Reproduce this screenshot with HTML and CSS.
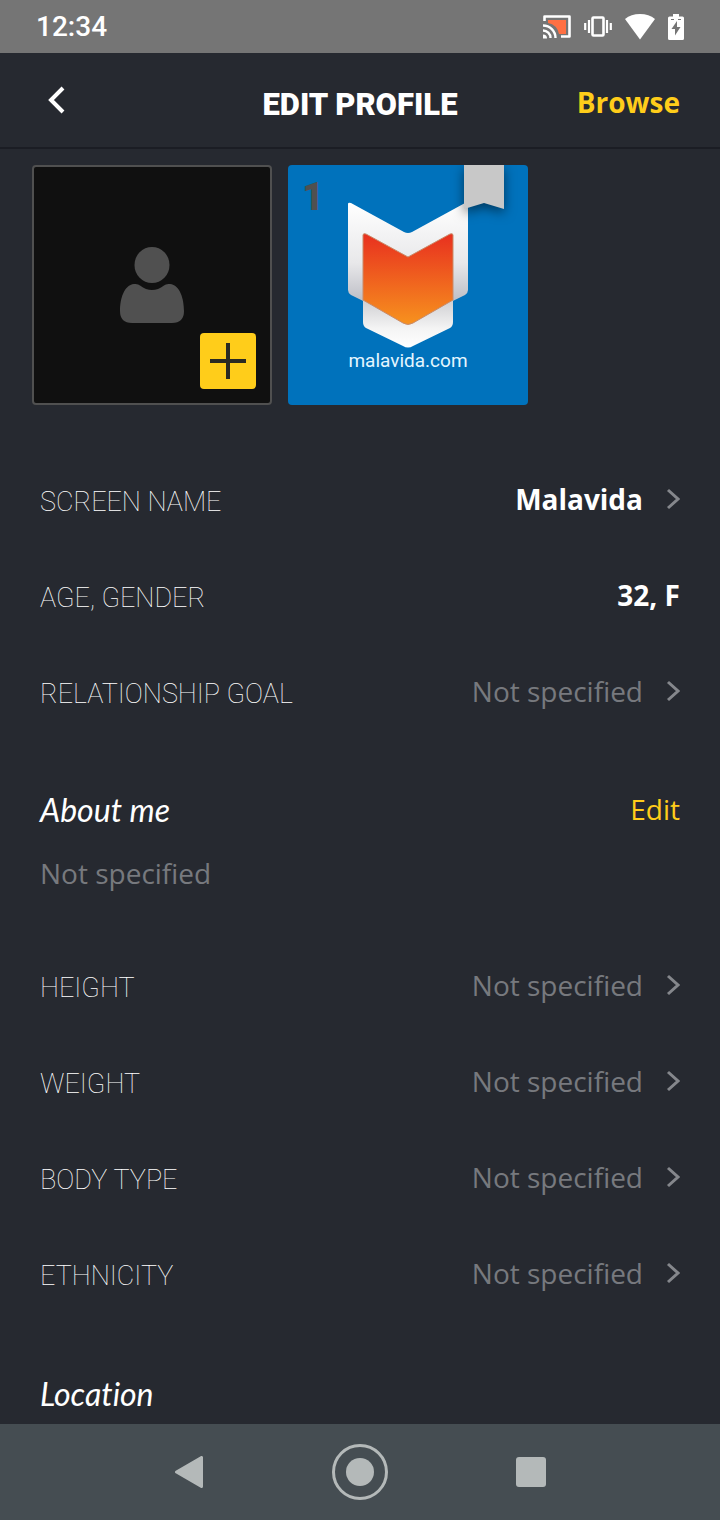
FILE: index.html
```html
<!DOCTYPE html>
<html lang="en">
<head>
    <meta charset="UTF-8">
    <meta name="viewport" content="width=device-width, initial-scale=1.0">
    <title>Edit Profile</title>
    <link rel="stylesheet" href="styles.css">
</head>
<body>
    <div class="status-bar">
        <span class="clock">12:34</span>
        <div class="status-icons">
            <svg class="cast" width="28" height="24" viewBox="0 0 28 24">
                <path d="M5 5h18v14h-7A14 14 0 0 0 5 8z" fill="#ff7043"/>
                <path d="M1.5 6V1.5h25v20H18" fill="none" stroke="#fff" stroke-width="2.6" stroke-linejoin="round"/>
                <path d="M0 10.5A12.5 12.5 0 0 1 12.5 23M0 15.5A7.5 7.5 0 0 1 7.5 23" fill="none" stroke="#fff" stroke-width="2.4"/>
                <path d="M0 19.5a4 4 0 0 1 4 4H0z" fill="#fff"/>
            </svg>
            <svg class="vibrate" width="28" height="24" viewBox="0 0 28 24">
                <rect x="8.5" y="2.5" width="11" height="18" rx="1" fill="none" stroke="#fff" stroke-width="2.6"/>
                <path d="M5 5v13M1.2 8v7M23 5v13M26.8 8v7" stroke="#fff" stroke-width="2.2"/>
            </svg>
            <svg class="wifi" width="30" height="26" viewBox="0 0 30 26">
                <path d="M0 5Q6 0 15 0t15 5L15 25.5z" fill="#fff"/>
            </svg>
            <svg class="battery" width="16" height="26" viewBox="0 0 16 26">
                <path d="M5 0h6v2.5h3.500A1.5 1.5 0 0 1 16 4v20.500a1.5 1.5 0 0 1-1.500 1.500h-13A1.5 1.5 0 0 1 0 24.500V4a1.5 1.5 0 0 1 1.500-1.500H5z" fill="#fff"/>
                <path d="M9 7l-5.500 8H7v6.500L12.500 13H9zM3 5h3v1H3zM10 5h3v1h-3z" fill="#757575"/>
            </svg>
        </div>
    </div>

    <header class="top-bar">
        <button type="button" class="back" aria-label="Back">
            <svg width="18" height="28" viewBox="0 0 18 28">
                <path d="M15 2L3 14l12 12" fill="none" stroke="#fff" stroke-width="4"/>
            </svg>
        </button>
        <h1>EDIT PROFILE</h1>
        <a href="#" class="browse">Browse</a>
    </header>

    <main>
        <section class="gallery">
            <button type="button" class="photo add-photo" aria-label="Add photo">
                <svg width="64" height="76" viewBox="0 0 64 76">
                    <ellipse cx="32" cy="18" rx="17.5" ry="18" fill="#505050"/>
                    <path d="M14 37q4-.5 6 1.500 12 9 24 0 2-2 6-1.500C60 38 64 52 64 64q0 12-12 12H12Q0 76 0 64C0 52 4 38 14 37z" fill="#505050"/>
                </svg>
                <span class="plus">
                    <svg width="36" height="36" viewBox="0 0 36 36">
                        <path d="M18 0v36M0 18h36" stroke="#2a2a22" stroke-width="4"/>
                    </svg>
                </span>
            </button>
            <button type="button" class="photo">
                <svg class="picture" viewBox="0 0 240 240">
                    <defs>
                        <linearGradient id="silver" x1="0" y1="0" x2="0" y2="1">
                            <stop offset="0" stop-color="#fff"/>
                            <stop offset=".5" stop-color="#e8e8ea"/>
                            <stop offset=".85" stop-color="#b9bac2"/>
                        </linearGradient>
                        <linearGradient id="fold" x1="0" y1="0" x2="0" y2="1">
                            <stop offset="0" stop-color="#cfcfd2"/>
                            <stop offset=".6" stop-color="#f4f4f4"/>
                            <stop offset="1" stop-color="#fff"/>
                        </linearGradient>
                        <linearGradient id="flame" x1="0" y1="0" x2="0" y2="1">
                            <stop offset="0" stop-color="#e8301f"/>
                            <stop offset="1" stop-color="#f7921e"/>
                        </linearGradient>
                    </defs>
                    <path d="M60 39q0-2 3-1l53 29q4 2 8 0l53-29q3-1 3 1v86q0 3-3 5l-57 28-57-28q-3-2-3-5z" fill="url(#silver)"/>
                    <path d="M75 135l45 24 45-24v22q0 4-3 6l-37 18q-5 3-10 0l-37-18q-3-2-3-6z" fill="url(#fold)"/>
                    <path d="M75 70q0-2 3-1l42 23 42-23q3-1 3 1v65l-40 23q-5 3-10 0l-40-23z" fill="url(#flame)" stroke="#c98b6a" stroke-width="1"/>
                    <text class="site" x="120" y="202" text-anchor="middle">malavida.com</text>
                </svg>
                <span class="order">1</span>
                <svg class="ribbon" width="40" height="44" viewBox="0 0 40 44">
                    <path d="M0 0h40v44l-20-6-20 6z" fill="#c8c8c8"/>
                </svg>
            </button>
        </section>

        <section class="fields">
            <button type="button" class="row">
                <span class="label">SCREEN NAME</span>
                <span class="value filled">Malavida</span>
                <svg class="chevron" viewBox="0 0 14 22"><path d="M2 2l10 9-10 9"/></svg>
            </button>
            <div class="row">
                <span class="label">AGE, GENDER</span>
                <span class="value filled">32, F</span>
            </div>
            <button type="button" class="row">
                <span class="label">RELATIONSHIP GOAL</span>
                <span class="value">Not specified</span>
                <svg class="chevron" viewBox="0 0 14 22"><path d="M2 2l10 9-10 9"/></svg>
            </button>
        </section>

        <section class="about">
            <div class="section-head">
                <h2>About me</h2>
                <a href="#" class="edit">Edit</a>
            </div>
            <p>Not specified</p>
        </section>

        <section class="fields">
            <button type="button" class="row">
                <span class="label">HEIGHT</span>
                <span class="value">Not specified</span>
                <svg class="chevron" viewBox="0 0 14 22"><path d="M2 2l10 9-10 9"/></svg>
            </button>
            <button type="button" class="row">
                <span class="label">WEIGHT</span>
                <span class="value">Not specified</span>
                <svg class="chevron" viewBox="0 0 14 22"><path d="M2 2l10 9-10 9"/></svg>
            </button>
            <button type="button" class="row">
                <span class="label">BODY TYPE</span>
                <span class="value">Not specified</span>
                <svg class="chevron" viewBox="0 0 14 22"><path d="M2 2l10 9-10 9"/></svg>
            </button>
            <button type="button" class="row">
                <span class="label">ETHNICITY</span>
                <span class="value">Not specified</span>
                <svg class="chevron" viewBox="0 0 14 22"><path d="M2 2l10 9-10 9"/></svg>
            </button>
        </section>

        <section class="location">
            <div class="section-head">
                <h2>Location</h2>
            </div>
        </section>
    </main>

    <nav class="nav-bar">
        <button type="button" aria-label="Back">
            <svg width="28" height="32" viewBox="0 0 28 32">
                <path d="M26.5 1.500v29L1.500 16z" fill="#b4b9b9" stroke="#b4b9b9" stroke-width="3" stroke-linejoin="round"/>
            </svg>
        </button>
        <button type="button" aria-label="Home">
            <svg width="56" height="56" viewBox="0 0 56 56">
                <circle cx="28" cy="28" r="26.5" fill="none" stroke="#b4b9b9" stroke-width="3"/>
                <circle cx="28" cy="28" r="14" fill="#b4b9b9"/>
            </svg>
        </button>
        <button type="button" aria-label="Recent apps">
            <svg width="30" height="30" viewBox="0 0 30 30">
                <rect width="30" height="30" rx="3" fill="#b4b9b9"/>
            </svg>
        </button>
    </nav>
</body>
</html>
```
FILE: styles.css
```css
* {
    margin: 0;
    padding: 0;
    box-sizing: border-box;
}

body {
    background: #262930;
    color: #fff;
    font-family: 'Open Sans', 'Noto Sans', sans-serif;
    font-size: 28px;
    height: 100vh;
    display: flex;
    flex-direction: column;
}

button {
    background: none;
    border: none;
    color: inherit;
    font: inherit;
    cursor: pointer;
}

a {
    color: #ffcd1a;
    text-decoration: none;
}

svg {
    display: block;
    flex-shrink: 0;
}

/* Status bar */
.status-bar {
    background: #757575;
    height: 53px;
    flex-shrink: 0;
    padding: 0 36px;
    display: flex;
    align-items: center;
    justify-content: space-between;
}

.clock {
    font-family: Roboto, sans-serif;
    font-weight: 500;
}

.status-icons {
    display: flex;
    align-items: center;
    gap: 13px;
}

/* Header */
.top-bar {
    height: 96px;
    flex-shrink: 0;
    padding: 4px 40px 0;
    border-bottom: 2px solid #1b1d24;
    display: grid;
    grid-template-columns: 1fr auto 1fr;
    align-items: center;
}

.back {
    justify-self: start;
    padding: 0 8px 4px;
}

h1 {
    font-family: Roboto, sans-serif;
    font-size: 31px;
    font-weight: 900;
    padding-top: 4px;
}

.browse {
    justify-self: end;
    font-weight: 700;
}

main {
    flex: 1;
    min-height: 0;
    overflow-y: auto;
    scrollbar-width: none;
}

/* Photos */
.gallery {
    display: flex;
    gap: 16px;
    padding: 16px 32px 46px;
}

.photo {
    position: relative;
    width: 240px;
    height: 240px;
    border-radius: 4px;
    background: #0072bc;
    overflow: hidden;
}

.add-photo {
    background: #101010;
    border: 2px solid #505050;
    display: flex;
    align-items: center;
    justify-content: center;
}

.plus {
    position: absolute;
    right: 14px;
    bottom: 14px;
    width: 56px;
    height: 56px;
    border-radius: 4px;
    background: #ffcd1a;
    display: flex;
    align-items: center;
    justify-content: center;
}

.picture {
    width: 100%;
    height: 100%;
}

.site {
    font-family: Roboto, sans-serif;
    font-size: 19px;
    fill: #e4f6ff;
}

.order {
    position: absolute;
    top: 12px;
    left: 14px;
    font-family: Roboto, sans-serif;
    font-size: 38px;
    font-weight: 900;
    line-height: 40px;
    color: #505050;
}

.ribbon {
    position: absolute;
    top: 0;
    right: 24px;
    filter: drop-shadow(0 4px 6px rgba(0, 0, 0, 0.5));
    overflow: visible;
}

/* Profile fields */
.row {
    width: 100%;
    height: 96px;
    padding: 0 40px;
    display: flex;
    align-items: center;
}

.label {
    flex: 1;
    padding-top: 6px;
    font-family: Roboto, sans-serif;
    font-size: 27px;
    font-weight: 100;
    text-align: left;
}

.value {
    color: #77797e;
}

.filled {
    color: #fff;
    font-weight: 700;
}

.chevron {
    width: 14px;
    height: 22px;
    margin-left: 23px;
    fill: none;
    stroke: #85878c;
    stroke-width: 3;
}

/* Text sections */
.about {
    padding: 38px 40px 32px;
}

.section-head {
    height: 64px;
    display: flex;
    align-items: center;
    justify-content: space-between;
}

h2 {
    font-family: Lato, cursive;
    font-size: 32px;
    font-style: italic;
    font-weight: 400;
    font-variant-ligatures: none;
}

.about p {
    line-height: 64px;
    color: #77797e;
}

.location {
    padding: 40px 40px 0;
}

/* Android navigation */
.nav-bar {
    height: 96px;
    flex-shrink: 0;
    padding: 0 104px;
    background: #454d52;
    display: flex;
    align-items: center;
}

.nav-bar button {
    flex: 1;
    display: flex;
    justify-content: center;
}
```
